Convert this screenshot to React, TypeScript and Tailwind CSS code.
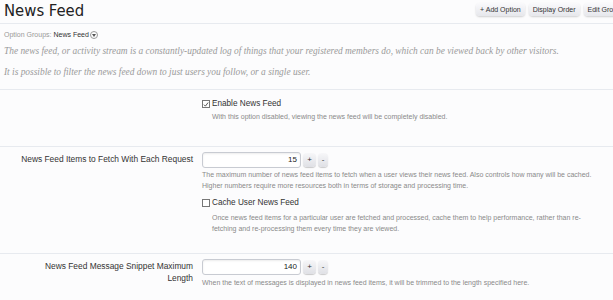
import { ReactNode } from 'react';

const sans = "font-['Liberation_Sans',Arial,sans-serif]";

function HeaderButton({ children }: { children: ReactNode }) {
  return (
    <button className="h-[13px] px-[4px] rounded-[4px] bg-gradient-to-b from-[#fafafc] to-[#e6e7ec] shadow-[0_1px_2px_rgba(0,0,0,0.18)] text-[7px] leading-[13px] text-[#333] whitespace-nowrap shrink-0">
      {children}
    </button>
  );
}

function SpinButton({ label, width }: { label: string; width: string }) {
  return (
    <button className={`${width} h-[14px] rounded-[4px] bg-gradient-to-b from-[#f7f7f9] to-[#dfe0e5] shadow-[0_1px_1px_rgba(0,0,0,0.2)] text-[8px] leading-[14px] text-[#333] text-center`}>
      {label}
    </button>
  );
}

function Spinbox({ value }: { value: string }) {
  return (
    <div className="flex items-center gap-[2px] h-[16px]">
      <div className="w-[99px] h-[16px] border border-[#c8cbd2] rounded-[3px] bg-white shadow-[inset_0_1px_2px_rgba(0,0,0,0.08)] text-right pr-[3px] text-[8px] leading-[14px] text-[#222]">
        {value}
      </div>
      <SpinButton label="+" width="w-[13px]" />
      <SpinButton label="-" width="w-[10px]" />
    </div>
  );
}

function Checkbox({ checked }: { checked?: boolean }) {
  return (
    <span className="w-[8px] h-[8px] border border-[#777] bg-white flex items-center justify-center shrink-0">
      {checked && (
        <svg width="7" height="7" viewBox="0 0 8 8">
          <path d="M1.2 4.2 L3.2 6.2 L6.8 1.4" fill="none" stroke="#333" strokeWidth="1.1" />
        </svg>
      )}
    </span>
  );
}

function Hint({ children }: { children: ReactNode }) {
  return <p className="text-[7px] leading-[11px] text-[#8a8a8a] whitespace-nowrap">{children}</p>;
}

function Row({ label, children }: { label?: ReactNode; children: ReactNode }) {
  return (
    <div className="flex">
      <div className="w-[202px] shrink-0 pr-[9px] text-right text-[8.4px] leading-[12px] text-[#333] pt-[1px]">
        {label}
      </div>
      <div className="flex-1">{children}</div>
    </div>
  );
}

export default function App() {
  return (
    <div className={`w-[613px] h-[300px] overflow-hidden bg-[#fcfcfd] ${sans}`}>
      <div className="flex items-start justify-between h-[24px] border-b border-[#e7eaef] pl-[4px]">
        <h1 className="text-[16.5px] leading-[22px] text-[#222] font-['DejaVu_Sans_Condensed','DejaVu_Sans',sans-serif]">News Feed</h1>
        <div className="flex gap-[4px] pt-[3px] mr-[-12px]">
          <HeaderButton>+ Add Option</HeaderButton>
          <HeaderButton>Display Order</HeaderButton>
          <HeaderButton>Edit Group</HeaderButton>
        </div>
      </div>

      <div className="pl-[4px] pt-[6px] flex items-center text-[7px] leading-[10px]">
        <span className="text-[#999]">Option Groups:</span>
        <span className="ml-[2px] text-[#333]">News Feed</span>
        <span className="ml-[1px] w-[8px] h-[8px] rounded-full border border-[#999] flex items-center justify-center">
          <svg width="4" height="3" viewBox="0 0 4 3">
            <path d="M0 0 L4 0 L2 3 Z" fill="#555" />
          </svg>
        </span>
      </div>

      <div className="pl-[4px] pt-[4px] font-['Liberation_Serif',serif] italic text-[9.4px] leading-[14px] text-[#9a9a9a] whitespace-nowrap">
        <p>The news feed, or activity stream is a constantly-updated log of things that your registered members do, which can be viewed back by other visitors.</p>
        <p className="mt-[7px]">It is possible to filter the news feed down to just users you follow, or a single user.</p>
      </div>

      <div className="mt-[10px] border-t border-[#e7eaef] h-[57px] pt-[8px]">
        <Row>
          <div className="flex items-center gap-[2px] h-[12px]">
            <Checkbox checked />
            <span className="text-[8.2px] leading-[12px] text-[#333]">Enable News Feed</span>
          </div>
          <div className="pl-[10px] pt-[1px]">
            <Hint>With this option disabled, viewing the news feed will be completely disabled.</Hint>
          </div>
        </Row>
      </div>

      <div className="border-t border-[#e7eaef] h-[107px] pt-[5px]">
        <Row label="News Feed Items to Fetch With Each Request">
          <Spinbox value="15" />
          <div className="pt-[1px]">
            <Hint>
              The maximum number of news feed items to fetch when a user views their news feed. Also controls how many will be cached.
              <br />
              Higher numbers require more resources both in terms of storage and processing time.
            </Hint>
          </div>
          <div className="flex items-center gap-[2px] h-[12px] mt-[6px]">
            <Checkbox />
            <span className="text-[8.2px] leading-[12px] text-[#333]">Cache User News Feed</span>
          </div>
          <div className="pl-[10px] pt-[3px]">
            <Hint>
              Once news feed items for a particular user are fetched and processed, cache them to help performance, rather than re-
              <br />
              fetching and re-processing them every time they are viewed.
            </Hint>
          </div>
        </Row>
      </div>

      <div className="border-t border-[#e7eaef] pt-[5px]">
        <Row
          label={
            <>
              News Feed Message Snippet Maximum
              <br />
              Length
            </>
          }
        >
          <Spinbox value="140" />
          <div className="pt-[2px]">
            <Hint>When the text of messages is displayed in news feed items, it will be trimmed to the length specified here.</Hint>
          </div>
        </Row>
      </div>
    </div>
  );
}
